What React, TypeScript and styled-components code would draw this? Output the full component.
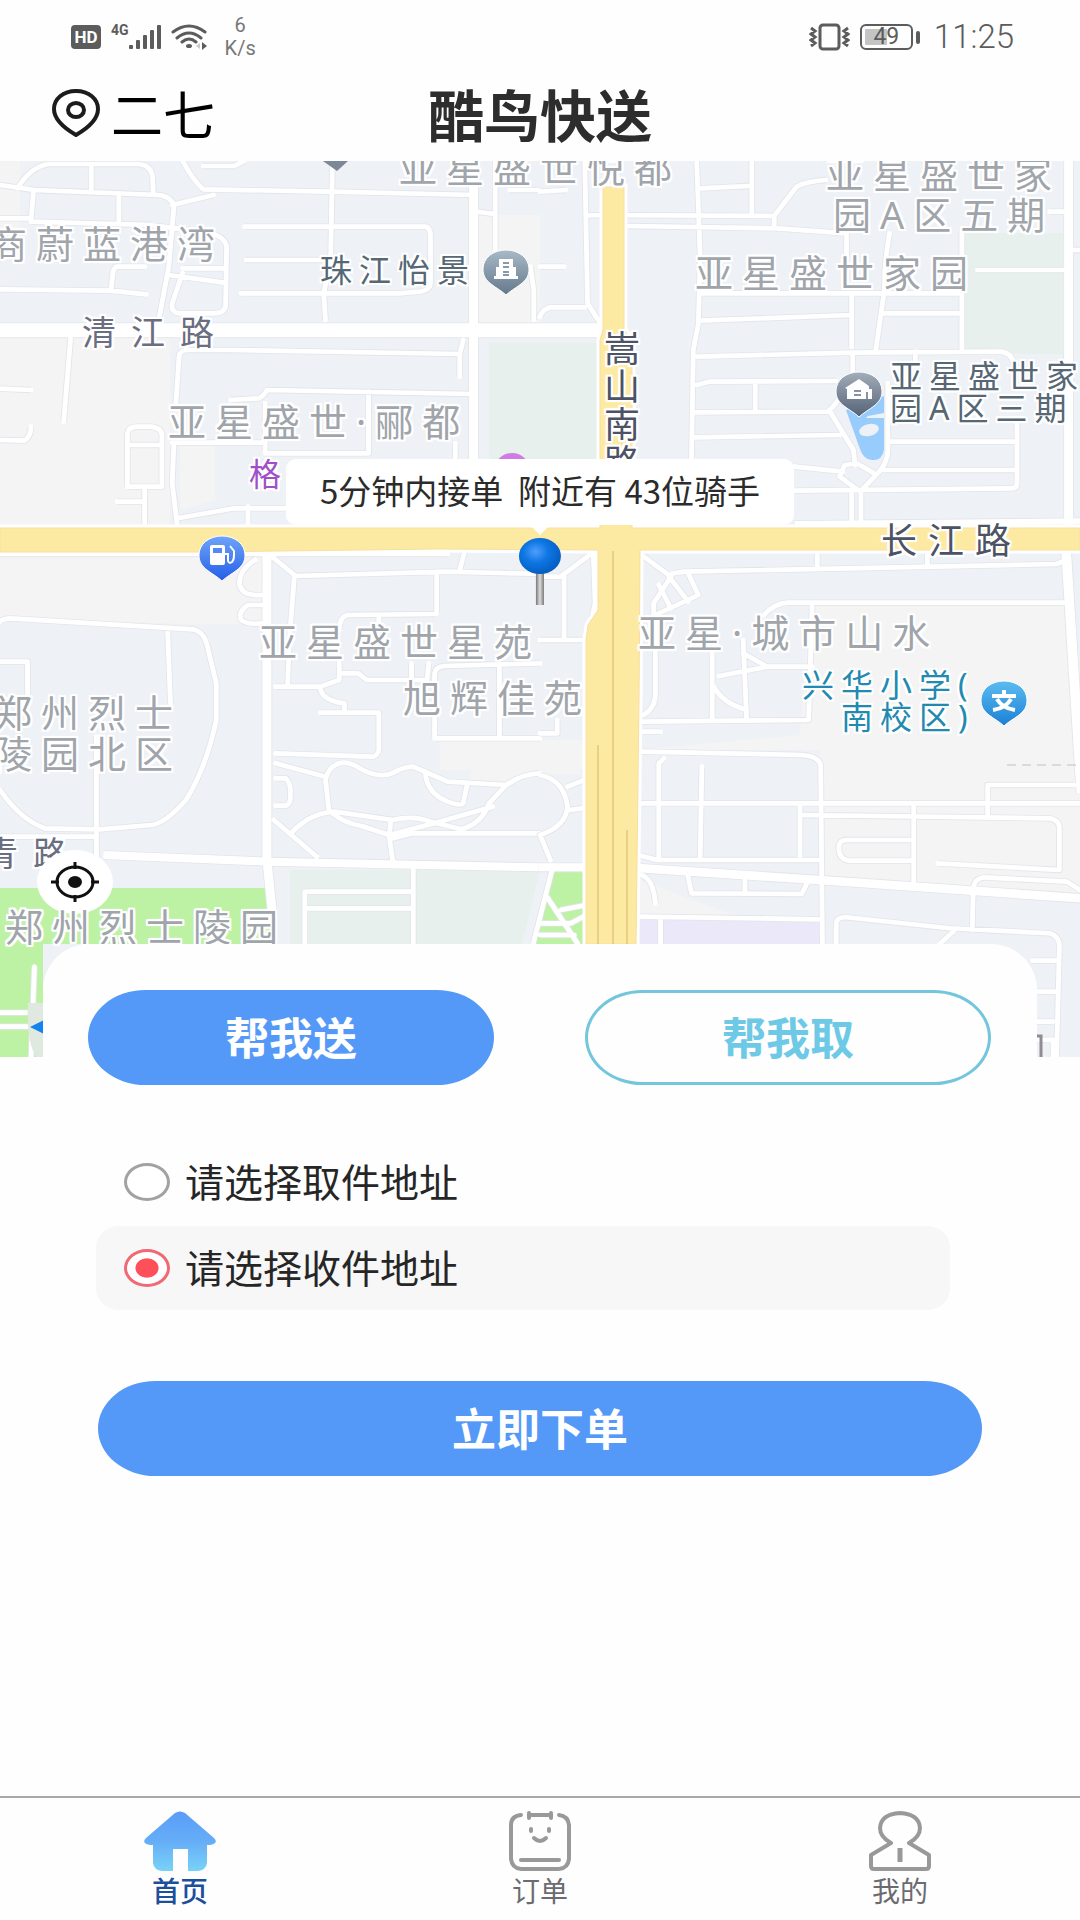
import React, { useState } from "react";
import styled, { createGlobalStyle, css } from "styled-components";

const CJK = `"Noto Sans CJK SC", "Noto Sans", sans-serif`;

const GlobalStyle = createGlobalStyle`
  * { box-sizing: border-box; }
  body { margin: 0; background: #fefefe; font-family: ${CJK}; color: #222; }
  button, input { font-family: inherit; }
`;

const Page = styled.div`
  min-height: 100vh;
  display: flex;
  flex-direction: column;
  overflow-x: hidden;
`;

/* ---------- status bar ---------- */

const StatusBar = styled.div`
  display: flex;
  justify-content: space-between;
  align-items: center;
  height: 74px;
  padding: 0 66px 0 71px;
  color: #5c5c5c;
  font-family: Roboto, sans-serif;
`;

const StatusGroup = styled.div`
  display: flex;
  align-items: center;
  gap: 10px;
`;

const HdBadge = styled.span`
  width: 30px;
  height: 24px;
  border-radius: 4px;
  background: #5c5c5c;
  color: #fff;
  font-size: 17px;
  font-weight: 700;
  line-height: 24px;
  text-align: center;
`;

const Signal = styled.span`
  display: flex;
  align-items: center;
`;

const Network = styled.span`
  align-self: flex-start;
  font-size: 14px;
  font-weight: 700;
  line-height: 12px;
`;

const Speed = styled.span`
  display: flex;
  flex-direction: column;
  align-items: center;
  padding-left: 7px;
  font-size: 20px;
  line-height: 23px;
  color: #777;
`;

const Battery = styled.span`
  display: flex;
  align-items: center;
  gap: 3px;
`;

const BatteryBody = styled.span`
  width: 53px;
  height: 26px;
  border: 2px solid #5c5c5c;
  border-radius: 6px;
  background: linear-gradient(90deg, #c4c4c4 22px, transparent 22px) content-box;
  padding: 3px;
  font-size: 23px;
  line-height: 16px;
  text-align: center;
`;

const BatteryTip = styled.span`
  width: 4px;
  height: 13px;
  border-radius: 2px;
  background: #5c5c5c;
`;

const Clock = styled.span`
  padding-left: 4px;
  font-size: 33px;
  font-weight: 300;
  line-height: 36px;
`;

/* ---------- header ---------- */

const Header = styled.header`
  display: grid;
  grid-template-columns: 1fr auto 1fr;
  align-items: center;
  height: 87px;
  padding: 0 52px 9px;
`;

const CityButton = styled.button`
  display: flex;
  align-items: center;
  justify-self: start;
  gap: 11px;
  padding: 0;
  border: 0;
  background: none;
  color: #000;
  font-size: 52px;
  line-height: 60px;
`;

const Title = styled.h1`
  margin: 0;
  font-size: 56px;
  font-weight: 700;
  line-height: 60px;
  color: #2d2d2d;
`;

/* ---------- map ---------- */

const MapArea = styled.section`
  position: relative;
  display: flex;
  justify-content: center;
  height: 896px;
  overflow: hidden;
  background: #eef1f6;
`;

const MapCanvas = styled.div`
  position: relative;
  flex: none;
  width: 1080px;
`;

const MapDrawing = styled.svg`
  display: block;
`;

type Tone = "area" | "road" | "street" | "place" | "school" | "shop";

const tones = {
  area: css`font-size: 38px; letter-spacing: 9px; color: #9fa5ab;`,
  road: css`font-size: 36px; letter-spacing: 11px; color: #4d5265;`,
  street: css`font-size: 34px; letter-spacing: 15px; color: #6b6e80;`,
  place: css`font-size: 32px; letter-spacing: 7px; color: #566775;`,
  school: css`font-size: 32px; letter-spacing: 7px; color: #2289b0; text-align: right;`,
  shop: css`font-size: 32px; color: #a04fc8;`,
};

const MapLabel = styled.span<{ $x: number; $y: number; $tone: Tone; $vertical?: boolean }>`
  position: absolute;
  left: ${(p) => p.$x}px;
  top: ${(p) => p.$y}px;
  white-space: pre;
  font-family: "Noto Sans", ${CJK};
  line-height: ${(p) => (p.$tone === "area" ? 41 : 32)}px;
  text-shadow: 2px 0 #fff, -2px 0 #fff, 0 2px #fff, 0 -2px #fff, 2px 2px #fff, -2px -2px #fff, 2px -2px #fff,
    -2px 2px #fff, 0 0 4px #fff;
  ${(p) => tones[p.$tone]}
  ${(p) => p.$vertical && css`writing-mode: vertical-rl; letter-spacing: 2px; line-height: 38px;`}
`;

const MapPin = styled.svg<{ $x: number; $y: number }>`
  position: absolute;
  left: ${(p) => p.$x}px;
  top: ${(p) => p.$y}px;
`;

const RiderCallout = styled.div`
  position: absolute;
  top: 298px;
  left: 50%;
  transform: translateX(-50%);
  display: flex;
  flex-direction: column;
  align-items: center;
`;

const CalloutBubble = styled.p`
  margin: 0;
  padding: 0 34px 4px;
  border-radius: 10px;
  background: #fff;
  color: #2b2b2b;
  font-size: 33px;
  line-height: 62px;
  white-space: pre;
`;

const CalloutArrow = styled.span`
  border: 10px solid transparent;
  border-top-color: #fff;
  border-bottom-width: 0;
`;

const LocateButton = styled.button`
  position: absolute;
  left: 37px;
  top: 689px;
  display: flex;
  align-items: center;
  justify-content: center;
  width: 76px;
  height: 64px;
  padding: 0;
  border: 0;
  border-radius: 50%;
  background: #fff;
`;

/* ---------- order sheet ---------- */

const Sheet = styled.main`
  position: relative;
  margin: -113px 43px 0;
  padding: 46px 46px 0 45px;
  border-radius: 46px 46px 0 0;
  background: #fefefe;
`;

const ModeSwitch = styled.div`
  display: flex;
  gap: 91px;
`;

const PillButton = styled.button<{ $outline?: boolean }>`
  flex: 1;
  height: 95px;
  padding: 0 0 4px;
  border: 3px solid ${(p) => (p.$outline ? "#74c6dc" : "#5499f7")};
  border-radius: 58px / 48px;
  background: ${(p) => (p.$outline ? "#fefefe" : "#5499f7")};
  color: ${(p) => (p.$outline ? "#6dc9e6" : "#fff")};
  font-size: 44px;
  font-weight: 700;
  line-height: 60px;
`;

const OrderForm = styled.form`
  display: flex;
  flex-direction: column;
`;

const AddressList = styled.div`
  display: flex;
  flex-direction: column;
  gap: 2px;
  margin: 55px 41px 71px 8px;
`;

const AddressOption = styled.label<{ $active: boolean }>`
  display: flex;
  align-items: center;
  gap: 15px;
  height: 84px;
  padding: 0 28px;
  border-radius: 22px;
  background: ${(p) => (p.$active ? "#f7f7f7" : "transparent")};
  color: #262626;
`;

const AddressText = styled.span`
  padding-bottom: 5px;
  font-size: 39px;
  line-height: 60px;
`;

const Radio = styled.input`
  appearance: none;
  width: 46px;
  height: 38px;
  margin: 0;
  border: 3px solid #a2a2a2;
  border-radius: 50%;
  background: #fff;
  &:checked {
    border-color: #f06a75;
    background: radial-gradient(ellipse 12px 10px at center, #fd5058 92%, #fff 100%);
  }
`;

const SubmitRow = styled.div`
  display: flex;
  padding: 0 9px 0 10px;
`;

/* ---------- tab bar ---------- */

const TabBar = styled.nav`
  display: flex;
  margin-top: auto;
  padding: 13px 0 11px;
  border-top: 2px solid #a8a8a8;
`;

const Tab = styled.a<{ $active?: boolean }>`
  flex: 1;
  display: flex;
  flex-direction: column;
  align-items: center;
  color: ${(p) => (p.$active ? "#1c4f9c" : "#6b6b70")};
  font-size: 28px;
  font-weight: ${(p) => (p.$active ? 500 : 400)};
  line-height: 38px;
  text-decoration: none;
`;

/* ---------- map data ---------- */

interface Tile {
  transform: string;
  wide: [string, number][];
  lanes: string;
}

const tiles: Tile[] = [
  {
    transform: "translate(0 150) scale(.3444 .3333)",
    wide: [["M0 541H1568", 40], ["M1375 100V1130", 24]],
    lanes:
      "M0 105L100 120L460 135Q500 140 505 170L490 350L462 505M50 115Q90 50 140 42L400 42Q440 45 443 80L445 130M265 42V120M345 140V215M97 125L90 215M0 205H90M530 32Q560 90 590 118L960 125L1380 135M590 48H680L710 32M500 165L620 135M965 50L960 330L940 430L945 510M710 230H1235Q1250 232 1250 260V400Q1250 420 1220 425L1160 430H700M715 330H955M1438 32V300M1380 185L1438 192M1480 120H1568M90 215L440 225M430 225L600 245Q655 260 658 290L655 470Q650 490 620 490H520Q495 485 500 460L530 370M490 375L650 398M530 355H655M420 350H340Q330 352 328 370L322 420M0 418L320 422L425 433M1540 350L1550 420V510M205 565L185 815M510 770L520 620Q522 600 545 600H665L1335 612V680M1345 570L1335 612M0 716L90 720M0 870L70 872Q90 860 90 830M670 750L750 745Q765 740 775 720L1375 732M770 760V900M770 910H1070V725M500 878H765M505 880L500 1000L515 1130M515 1105L680 1075H840M370 1010V850Q372 832 395 830H440Q472 835 470 860V1010H370M370 885H470M420 1015V1130M340 1055H415M1322 880V925M720 1070V1120",
  },
  {
    transform: "translate(540 150) scale(.3444 .3333)",
    wide: [["M0 541H180", 40], ["M1535 32V1130", 24], ["M740 1122L1568 1114", 16]],
    lanes:
      "M455 32L465 320L460 520L445 600L440 925M615 32V190M465 115L605 108M135 195L680 198L745 110Q770 95 830 90M250 228L690 235L890 250V320M680 198V230M130 32L138 460L175 520M0 125L75 120M0 350H70M0 500Q5 480 30 472H130M460 512L905 495M905 430V590M1015 250Q1000 330 1000 420L975 600M1225 240V600M995 490H1220M470 430H1225M455 620L905 608L1340 605Q1370 610 1375 640M455 705L490 695L860 693M625 700V785M450 787L835 785Q860 765 870 740M845 790L910 900L915 945M450 862L870 855M1015 875H1380M1385 820V1000Q1385 1015 1370 1015L740 1022M1000 960H1385M740 950L880 965M1270 360H1520M1480 185H1520M1540 300H1568M1010 700V900Q1010 935 985 965L930 1025L870 980L885 945L920 940L970 970M905 1030V1130M932 1030V1130M908 610V680M1090 605V640",
  },
  {
    transform: "translate(0 540) scale(.3444 .3333)",
    wide: [["M775 30V960L792 1130", 24], ["M300 945L780 965L1568 982", 22]],
    lanes:
      "M0 42H1300M0 245Q10 235 30 235L560 268Q590 275 600 310L628 430V540Q600 680 540 780Q480 850 440 855L290 868L130 865Q60 840 0 750M487 280L495 490M0 365H80V470M280 590V960M0 890H275M760 165Q700 170 695 130Q695 90 740 60M760 195H720Q690 215 700 240Q720 255 760 250M790 50L855 105L840 300L835 440M855 108L1300 95L1568 102M1350 30L1335 90M1268 100V220M985 270Q985 230 1010 225L1265 222M1100 230V260M800 440H930L985 420V360M990 400H1040L1065 420H1240L1245 370M1195 370V415M930 440Q930 480 1000 490V515M930 518H1100V630Q1095 650 1080 650L800 640M1262 595V400Q1265 380 1290 378L1568 370M1262 595H1568M1450 375V590M800 670L945 710M955 810L945 720Q955 670 1000 668C1040 670 1050 700 1100 705S1150 680 1200 680L1300 725L1470 735Q1520 700 1568 700M1235 700Q1240 760 1300 785Q1340 800 1345 790L1355 740M800 715H830Q845 730 843 760Q845 795 830 797H800M795 840L920 950M850 875Q900 820 970 815L1140 840Q1200 825 1250 845L1340 868Q1400 850 1420 790L1470 735M965 820Q1000 850 1050 858L1130 885L1260 850L1430 800M1135 840L1130 890L1140 960M1140 895L1200 880H1568M1200 990V1212M885 1212V1055H1195M885 1105H1195M100 1280L90 1560M0 1418H80M0 1460H80",
  },
  {
    transform: "translate(540 540) scale(.3444 .3333)",
    wide: [["M-4 982H200", 22], ["M250 982L810 1020L1568 1075", 24], ["M1528 40L1572 760", 26], ["M160 40L165 190L155 240", 22]],
    lanes:
      "M0 705Q70 720 80 800Q75 860 0 885L30 960M80 740L140 715M85 810L140 803M70 110V300M0 300H145M0 110H60L150 40M0 580H50V540M295 45L380 110L330 190V250M385 100L420 95L1500 72L1530 60M805 35V80M1125 40V72M375 110L430 185M345 135L380 205M430 100L460 165L335 225M335 225V470Q330 510 300 525M650 225Q680 190 720 188H1520M790 195L780 540L295 545M500 340V540M590 300L600 540M520 408L660 380H790M590 340L660 380M505 440Q530 490 600 510M300 575H350M295 635L760 645Q815 650 815 680L820 1212M345 955V670L360 655M470 680L465 955M285 790H1568M755 795V950M285 945L340 960H810M765 825L1480 835Q1510 840 1508 870V990L1155 970M1300 825V735H1550M1085 800V1030M1085 900H890Q865 900 868 930Q870 960 900 962H1080M430 1010L440 1060L760 1062L775 1030M595 1020V1060M295 1005Q330 1020 335 1090M285 1130L810 1138M350 1135V1212M860 1212V1150Q862 1130 890 1132L1190 1165L1480 1180Q1510 1190 1508 1220L1500 1550M1255 1170L1258 1050Q1260 1015 1290 1012L1530 1025L1568 1050M1160 1212L1200 1175M1430 1262H1500M1440 1355H1500M1440 1445H1490M1450 1500H1490V1550M35 990L-20 1212M20 1070L110 1212M60 1110L135 1095M0 1150H90L135 1125M0 1185H100",
  },
];

interface LabelData {
  text: string;
  x: number;
  y: number;
  tone: Tone;
  vertical?: boolean;
}

const labels: LabelData[] = [
  { text: "亚星盛世悦都", x: 399, y: -14, tone: "area" },
  { text: "亚星盛世家", x: 826, y: -8, tone: "area" },
  { text: "园A区五期", x: 833, y: 33, tone: "area" },
  { text: "商蔚蓝港湾", x: -11, y: 62, tone: "area" },
  { text: "亚星盛世家园", x: 695, y: 91, tone: "area" },
  { text: "珠江怡景", x: 320, y: 93, tone: "place" },
  { text: "清江路", x: 82, y: 155, tone: "street" },
  { text: "嵩山南路", x: 600, y: 169, tone: "road", vertical: true },
  { text: "亚星盛世·郦都", x: 168, y: 240, tone: "area" },
  { text: "亚星盛世家\n园A区三期", x: 890, y: 199, tone: "place" },
  { text: "格", x: 249, y: 297, tone: "shop" },
  { text: "长江路", x: 881, y: 364, tone: "road" },
  { text: "亚星盛世星苑", x: 259, y: 460, tone: "area" },
  { text: "旭辉佳苑", x: 403, y: 516, tone: "area" },
  { text: "亚星·城市山水", x: 638, y: 451, tone: "area" },
  { text: "郑州烈士\n陵园北区", x: -6, y: 531, tone: "area" },
  { text: "兴华小学(\n南校区)", x: 802, y: 508, tone: "school" },
  { text: "青路", x: -16, y: 676, tone: "street" },
];

function Roads({ tile }: { tile: Tile }) {
  return (
    <g transform={tile.transform} fill="none" strokeLinejoin="round">
      <path d={tile.lanes} stroke="#e3e5ea" strokeWidth={19} />
      {tile.wide.map(([d, w]) => (
        <path key={d} d={d} stroke="#e3e5ea" strokeWidth={w + 7} />
      ))}
      <path d={tile.lanes} stroke="#fff" strokeWidth={14} strokeLinecap="round" />
      {tile.wide.map(([d, w]) => (
        <path key={d} d={d} stroke="#fff" strokeWidth={w + 2} />
      ))}
    </g>
  );
}

function CityMap() {
  return (
    <MapDrawing width="1080" height="896" viewBox="0 161 1080 896" aria-hidden="true">
      <rect y="161" width="1080" height="896" fill="#eef1f6" />
      <g fill="#f4f4f5">
        <path d="M0 161H20V195L0 190ZM0 338H170V528H0ZM0 550H262V624H190L0 618ZM475 215H540V322H475ZM180 445H215V500L180 510Z" />
        <path d="M810 605H1064L1080 790V900L820 882V750H640V880L810 944H636V750L800 735Z" />
        <path d="M440 740H586V770H440ZM0 161H20V230H0ZM470 740H580V775Q540 770 500 790L470 780Z" />
      </g>
      <path d="M489 343H603V527H489ZM965 233H1063V354H965ZM290 870H540L522 944H290Z" fill="#e7f0ed" />
      <path d="M639 920H821V944H639Z" fill="#ebe8fa" />
      <path d="M0 888H268L272 944H43V1057H0ZM550 872H587V944H532Z" fill="#bdf1a3" />
      {tiles.map((t) => (
        <Roads key={t.transform} tile={t} />
      ))}
      <path d="M846 410L884 396V450Q882 461 872 460Q864 460 860 449Z" fill="#98ccfc" />
      <path d="M866 418H884V413L868 416Z" fill="#eef1f6" />
      <ellipse cx="869" cy="430" rx="10" ry="6" fill="#eef1f6" transform="rotate(-14 869 430)" />
      <path d="M603 187H624V330L632 340V528H1080V550H640L639 700L636 944H586V640L588 625L598 610V550L440 549L200 552H0V528H600V340L603 330Z" fill="#fdeaa2" stroke="#fff" strokeWidth="7" />
      <path d="M603 187H624V330L632 340V528H1080V550H640L639 700L636 944H586V640L588 625L598 610V550L440 549L200 552H0V528H600V340L603 330Z" fill="#fdeaa2" stroke="#f9dda0" />
      <path d="M613 551V944M598 745V944M627 830V944" stroke="#e9d084" strokeWidth="2" />
      <path d="M1007 765H1080" stroke="#dadada" strokeWidth="2" strokeDasharray="9 6" />
      <path d="M323 161H348L337 171Z" fill="#7c8798" />
      <circle cx="512" cy="471" r="18" fill="#d07be6" />
      <path d="M28 1003Q26 1040 36 1057H43V1003Z" fill="#dfe9df" />
      <path d="M30 1027L44 1020V1034Z" fill="#1583ee" />
      <path d="M1037 1036H1041V1057" fill="none" stroke="#8d8d92" strokeWidth="3" />
    </MapDrawing>
  );
}

interface PlacePinProps {
  x: number;
  y: number;
  id: string;
  from: string;
  to: string;
  children: React.ReactNode;
}

function PlacePin({ x, y, id, from, to, children }: PlacePinProps) {
  return (
    <MapPin $x={x} $y={y} width="48" height="47" viewBox="0 0 48 47" aria-hidden="true">
      <defs>
        <linearGradient id={id} x1="0" y1="0" x2="0" y2="1">
          <stop offset="0" stopColor={from} />
          <stop offset="1" stopColor={to} />
        </linearGradient>
      </defs>
      <path
        d="M24 1C11 1 1 9 1 20C1 27 4 31 9 35C14 39 20 42 24 46C28 42 34 39 39 35C44 31 47 27 47 20C47 9 37 1 24 1Z"
        fill={`url(#${id})`}
        stroke="#fff"
      />
      {children}
    </MapPin>
  );
}

const options = [
  { value: "pickup", text: "请选择取件地址" },
  { value: "delivery", text: "请选择收件地址" },
];

export default function App() {
  const [address, setAddress] = useState("delivery");

  return (
    <Page>
      <GlobalStyle />

      <StatusBar>
        <StatusGroup>
          <HdBadge>HD</HdBadge>
          <Signal>
            <Network>4G</Network>
            <svg width="32" height="26" viewBox="0 0 32 26" fill="#5c5c5c" aria-hidden="true">
              <rect y="21" width="4" height="4" rx="1" />
              <rect x="7" y="16" width="4" height="9" rx="1" />
              <rect x="14" y="11" width="4" height="14" rx="1" />
              <rect x="21" y="6" width="4" height="19" rx="1" />
              <rect x="28" y="1" width="4" height="24" rx="1" />
            </svg>
          </Signal>
          <svg width="37" height="26" viewBox="0 0 37 26" fill="none" stroke="#5c5c5c" strokeWidth="3" strokeLinecap="round" aria-hidden="true">
            <path d="M2 8Q18 -4 34 8M6 14Q18 4 30 14M11 18Q18 12 25 18" />
            <ellipse cx="18" cy="22" rx="3" ry="2" fill="#5c5c5c" stroke="none" />
            <path d="M31 18L36 22L31 26Z" fill="#5c5c5c" stroke="none" />
            <path d="M29 19L25 22L29 25Z" fill="#c8c8c8" stroke="none" />
          </svg>
          <Speed>
            <span>6</span>
            <span>K/s</span>
          </Speed>
        </StatusGroup>
        <StatusGroup>
          <svg width="41" height="28" viewBox="0 0 41 28" fill="none" stroke="#5c5c5c" strokeWidth="3" aria-hidden="true">
            <rect x="11" y="2" width="19" height="24" rx="3" />
            <path d="M2 5L6 8L2 11L6 14L2 17L6 20L2 23M39 5L35 8L39 11L35 14L39 17L35 20L39 23" strokeWidth="3" />
          </svg>
          <Battery>
            <BatteryBody>49</BatteryBody>
            <BatteryTip />
          </Battery>
          <Clock>11:25</Clock>
        </StatusGroup>
      </StatusBar>

      <Header>
        <CityButton type="button">
          <svg width="48" height="48" viewBox="0 0 48 48" fill="none" stroke="#1c1c1c" strokeWidth="4" aria-hidden="true">
            <path d="M24 2C11 2 2 10 2 20C2 31 12 39 24 46C36 39 46 31 46 20C46 10 37 2 24 2Z" strokeLinejoin="round" />
            <ellipse cx="24" cy="21" rx="8" ry="7" />
          </svg>
          二七
        </CityButton>
        <Title>酷鸟快送</Title>
      </Header>

      <MapArea>
        <MapCanvas>
          <CityMap />
          {labels.map((l) => (
            <MapLabel key={l.text + l.y} $x={l.x} $y={l.y} $tone={l.tone} $vertical={l.vertical}>
              {l.text}
            </MapLabel>
          ))}
          <PlacePin x={482} y={88} id="pin-tower" from="#a9b9c6" to="#64798c">
            <path d="M17 10H31V18H34V27H36V30H12V27H14V18H17Z" fill="#fff" />
            <path d="M21 14H27M21 18H27M21 23H27M21 26H27" stroke="#8798a7" strokeWidth="2" />
          </PlacePin>
          <PlacePin x={835} y={210} id="pin-house" from="#a3adba" to="#536276">
            <path d="M10 17L24 8L34 15V18H37V28H12V18Z" fill="#fff" />
            <path d="M19 20H26M19 24H26M32 21V28" stroke="#8793a2" strokeWidth="2" />
          </PlacePin>
          <PlacePin x={198} y={374} id="pin-fuel" from="#6fa4f8" to="#245ee8">
            <rect x="12" y="10" width="15" height="20" rx="2" fill="#fff" />
            <rect x="15" y="13" width="9" height="5" fill="#5289f3" />
            <path d="M27 19H30V26Q31 29 34 27Q36 25 36 20V16L32 11" fill="none" stroke="#fff" strokeWidth="2" />
          </PlacePin>
          <PlacePin x={980} y={519} id="pin-school" from="#5cbcf0" to="#1b80d6">
            <path d="M24 10V15M12 16H36M17 19Q22 28 35 30M31 19Q26 28 13 30" fill="none" stroke="#fff" strokeWidth="4" />
          </PlacePin>
          <LocateButton type="button" aria-label="定位">
            <svg width="50" height="42" viewBox="0 0 50 42" fill="none" stroke="#111" strokeWidth="3" aria-hidden="true">
              <ellipse cx="25" cy="21" rx="18" ry="15" />
              <path d="M25 1V8M25 34V41M1 21H9M41 21H49" />
              <ellipse cx="25" cy="21" rx="7" ry="6" fill="#111" stroke="none" />
            </svg>
          </LocateButton>
          <MapLabel $x={5} $y={745} $tone="area">郑州烈士陵园</MapLabel>
        </MapCanvas>
        <RiderCallout>
          <CalloutBubble>{"5分钟内接单  附近有 43位骑手"}</CalloutBubble>
          <CalloutArrow />
          <svg width="44" height="70" viewBox="0 0 44 70" aria-hidden="true">
            <defs>
              <radialGradient id="ball" cx=".4" cy=".38" r=".6">
                <stop offset="0" stopColor="#4d9ffb" />
                <stop offset=".5" stopColor="#0e76e4" />
                <stop offset="1" stopColor="#0560c4" />
              </radialGradient>
              <linearGradient id="stick">
                <stop offset="0" stopColor="#777" />
                <stop offset=".5" stopColor="#ddd" />
                <stop offset="1" stopColor="#777" />
              </linearGradient>
            </defs>
            <rect x="18" y="30" width="8" height="40" fill="url(#stick)" />
            <ellipse cx="22" cy="21" rx="21" ry="18" fill="url(#ball)" />
          </svg>
        </RiderCallout>
      </MapArea>

      <Sheet>
        <ModeSwitch>
          <PillButton type="button">帮我送</PillButton>
          <PillButton type="button" $outline>帮我取</PillButton>
        </ModeSwitch>
        <OrderForm onSubmit={(e) => e.preventDefault()}>
          <AddressList role="radiogroup">
            {options.map((o) => (
              <AddressOption key={o.value} htmlFor={o.value} $active={address === o.value}>
                <Radio
                  id={o.value}
                  type="radio"
                  name="address"
                  checked={address === o.value}
                  onChange={() => setAddress(o.value)}
                />
                <AddressText>{o.text}</AddressText>
              </AddressOption>
            ))}
          </AddressList>
          <SubmitRow>
            <PillButton type="submit">立即下单</PillButton>
          </SubmitRow>
        </OrderForm>
      </Sheet>

      <TabBar>
        <Tab href="#home" $active>
          <svg width="72" height="60" viewBox="0 0 72 60" aria-hidden="true">
            <defs>
              <linearGradient id="home" x1="0" y1="0" x2="0" y2="1">
                <stop offset="0" stopColor="#5a9df8" />
                <stop offset=".5" stopColor="#65adf7" />
                <stop offset="1" stopColor="#79d2f8" />
              </linearGradient>
            </defs>
            <path
              d="M31 2Q36 -1 41 2L70 27Q73 30 71 32Q69 34 63 34V52Q62 59 54 60H44V38H29V60H18Q10 59 9 52V34Q3 34 1 32Q-1 30 2 27Z"
              fill="url(#home)"
            />
          </svg>
          首页
        </Tab>
        <Tab href="#orders">
          <svg width="64" height="60" viewBox="0 0 64 60" fill="none" stroke="#999" strokeWidth="4" strokeLinecap="round" aria-hidden="true">
            <path d="M13 4Q3 5 3 14V48Q4 57 13 58H51Q60 57 61 48V14Q60 5 51 4" />
            <path d="M21 2V7M43 2V7M21 4H43M13 49H51" />
            <path d="M23 18V20M41 18V20M26 27Q32 33 38 27" />
          </svg>
          订单
        </Tab>
        <Tab href="#mine">
          <svg width="64" height="60" viewBox="0 0 64 60" fill="none" stroke="#999" strokeWidth="4" strokeLinejoin="round" aria-hidden="true">
            <path d="M23 32Q12 26 12 17Q13 3 32 2Q51 3 52 17Q52 26 41 32L61 44V55Q61 58 58 58H6Q3 58 3 55V44Z" />
            <path d="M32 37V51" strokeWidth="5" />
          </svg>
          我的
        </Tab>
      </TabBar>
    </Page>
  );
}
